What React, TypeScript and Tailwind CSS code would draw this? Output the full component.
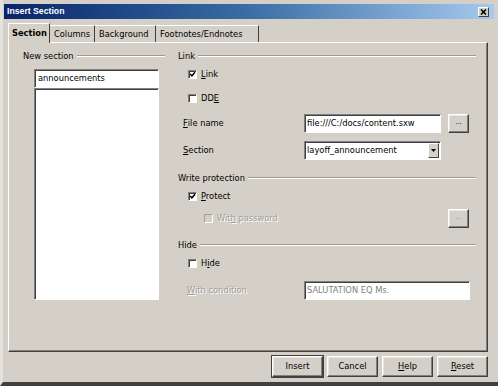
import React from "react";

const raised =
  "border border-t-white border-l-white border-r-[#404040] border-b-[#404040] shadow-[inset_-1px_-1px_0_#808080,inset_1px_1px_0_#e8e6e0]";
const sunken =
  "border border-t-[#808080] border-l-[#808080] border-r-white border-b-white shadow-[inset_1px_1px_0_#404040]";

function Heading({ children }: { children: React.ReactNode }) {
  return (
    <div className="flex items-center h-[10px] gap-[3px]">
      <span className="leading-none whitespace-nowrap">{children}</span>
      <div className="flex-1 h-[2px] border-t border-t-[#9c9a94] border-b border-b-white" />
    </div>
  );
}

function Check({ checked, disabled }: { checked?: boolean; disabled?: boolean }) {
  return (
    <span
      className={
        disabled
          ? "w-[9px] h-[9px] shrink-0 bg-[#d4d0c8] border border-t-[#a09e98] border-l-[#a09e98] border-r-white border-b-white"
          : "w-[9px] h-[9px] shrink-0 bg-white border border-t-[#808080] border-l-[#808080] border-r-white border-b-white shadow-[inset_1px_1px_0_#404040]"
      }
    >
      {checked && (
        <svg viewBox="0 0 7 7" className="w-[7px] h-[7px]">
          <path d="M1.2 3 L2.9 4.8 L6 1.2" fill="none" stroke="#000" strokeWidth="1.5" />
        </svg>
      )}
    </span>
  );
}

function CheckRow({
  checked,
  disabled,
  children,
}: {
  checked?: boolean;
  disabled?: boolean;
  children: React.ReactNode;
}) {
  return (
    <div className="flex items-center gap-[4px] h-[12px]">
      <Check checked={checked} disabled={disabled} />
      <span
        className={
          disabled ? "leading-none text-[#a09e98] [text-shadow:1px_1px_0_#fff]" : "leading-none"
        }
      >
        {children}
      </span>
    </div>
  );
}

function DotsButton({ disabled }: { disabled?: boolean }) {
  return (
    <div
      className={`w-[21px] h-[19px] flex items-center justify-center ${raised} ${
        disabled ? "text-[#a09e98]" : "text-black"
      }`}
    >
      <span className="leading-none text-[7px] -mt-[2px]">...</span>
    </div>
  );
}

function Button({ children, def }: { children: React.ReactNode; def?: boolean }) {
  return (
    <div
      className={`w-[51px] h-[21px] flex items-center justify-center ${raised} ${
        def ? "outline outline-1 outline-[#404040]" : ""
      }`}
    >
      <span className="leading-none">{children}</span>
    </div>
  );
}

export default function App() {
  return (
    <div className="w-[498px] h-[386px] bg-[#d4d0c8] flex flex-col text-[8.3px] text-black font-['DejaVu_Sans',sans-serif] border-l-[3px] border-l-[#e4e2dc] border-b-[4px] border-b-[#404040] overflow-hidden">
      {/* title bar */}
      <div className="mt-[4px] ml-[1px] mr-[4px] h-[15px] flex items-center bg-gradient-to-r from-[#0a246a] via-[#3a6ea5] to-[#a6caf0] pl-[3px] pr-[5px]">
        <span className="text-white font-bold text-[8.7px] leading-none font-['Liberation_Sans',sans-serif]">
          Insert Section
        </span>
        <div className="ml-auto w-[11px] h-[10px] bg-[#d4d0c8] flex items-center justify-center border border-t-white border-l-white border-r-[#404040] border-b-[#404040]">
          <svg viewBox="0 0 7 6" className="w-[7px] h-[6px]">
            <path d="M1 0.5 L6 5.5 M6 0.5 L1 5.5" stroke="#000" strokeWidth="1.6" />
          </svg>
        </div>
      </div>

      {/* tabs */}
      <div className="mt-[4px] ml-[5px] flex items-end h-[19px] relative z-10">
        <div className="h-[20px] px-[3px] flex items-center bg-[#d4d0c8] border-t border-l border-t-white border-l-white border-r border-r-[#404040] -mb-[1px] w-[42px]">
          <span className="font-bold leading-none">Section</span>
        </div>
        <div className="h-[17px] w-[45px] pl-[4px] flex items-center border-t border-t-white border-r border-r-[#404040]">
          <span className="leading-none">Columns</span>
        </div>
        <div className="h-[17px] w-[61px] pl-[4px] flex items-center border-t border-t-white border-r border-r-[#404040]">
          <span className="leading-none">Background</span>
        </div>
        <div className="h-[17px] w-[103px] pl-[4px] flex items-center border-t border-t-white border-r border-r-[#404040]">
          <span className="leading-none">Footnotes/Endnotes</span>
        </div>
      </div>

      {/* panel */}
      <div className="ml-[5px] mr-[10px] h-[310px] flex border-t border-l border-t-white border-l-white border-r border-b border-r-[#404040] border-b-[#404040] shadow-[inset_-1px_-1px_0_#808080]">
        {/* left column */}
        <div className="w-[162px] pl-[14px] pr-[6px] pt-[8px] flex flex-col">
          <Heading>New section</Heading>
          <div className="ml-[11px] mt-[8px] w-[125px] flex flex-col">
            <div className={`h-[19px] bg-white flex items-center pl-[3px] ${sunken}`}>
              <span className="leading-none">announcements</span>
            </div>
            <div className={`h-[212px] bg-white ${sunken}`} />
          </div>
        </div>

        {/* right column */}
        <div className="flex-1 pl-[7px] pr-[11px] pt-[8px] flex flex-col">
          <Heading>Link</Heading>
          <div className="pl-[10px] mt-[7px] flex flex-col gap-[12px]">
            <CheckRow checked>
              <span className="underline">L</span>ink
            </CheckRow>
            <CheckRow>
              DD<span className="underline">E</span>
            </CheckRow>
          </div>

          <div className="pl-[5px] pr-[7px] mt-[10px] flex items-start">
            <span className="w-[121px] h-[19px] flex items-center leading-none">
              <span className="underline">F</span>ile name
            </span>
            <div className={`w-[137px] h-[19px] bg-white flex items-center pl-[2px] ${sunken}`}>
              <span className="leading-none">file:///C:/docs/content.sxw</span>
            </div>
            <div className="ml-auto">
              <DotsButton />
            </div>
          </div>

          <div className="pl-[5px] pr-[7px] mt-[8px] flex items-start">
            <span className="w-[121px] h-[19px] flex items-center leading-none">
              <span className="underline">S</span>ection
            </span>
            <div className={`w-[137px] h-[19px] bg-white flex items-center pl-[2px] ${sunken}`}>
              <span className="leading-none flex-1">layoff_announcement</span>
              <div className="w-[11px] h-[15px] mr-[1px] bg-[#d4d0c8] flex items-center justify-center border border-t-white border-l-white border-r-[#404040] border-b-[#404040]">
                <svg viewBox="0 0 5 3" className="w-[5px] h-[3px]">
                  <path d="M0 0 L5 0 L2.5 3 Z" fill="#000" />
                </svg>
              </div>
            </div>
          </div>

          <div className="mt-[13px]">
            <Heading>Write protection</Heading>
          </div>
          <div className="pl-[10px] mt-[7px]">
            <CheckRow checked>
              <span className="underline">P</span>rotect
            </CheckRow>
          </div>
          <div className="pl-[26px] pr-[7px] mt-[7px] flex items-center h-[19px]">
            <CheckRow disabled>
              Wit<span className="underline">h</span> password
            </CheckRow>
            <div className="ml-auto">
              <DotsButton disabled />
            </div>
          </div>

          <div className="mt-[12px]">
            <Heading>Hide</Heading>
          </div>
          <div className="pl-[10px] mt-[7px]">
            <CheckRow>
              H<span className="underline">i</span>de
            </CheckRow>
          </div>
          <div className="pl-[9px] pr-[6px] mt-[12px] flex items-center">
            <span className="w-[117px] leading-none text-[#a09e98] [text-shadow:1px_1px_0_#fff]">
              <span className="underline">W</span>ith condition
            </span>
            <div className={`flex-1 h-[19px] bg-white flex items-center pl-[2px] ${sunken}`}>
              <span className="leading-none text-[#808080]">SALUTATION EQ Ms.</span>
            </div>
          </div>
        </div>
      </div>

      {/* buttons */}
      <div className="mt-[4px] mr-[10px] flex justify-end gap-[4px]">
        <Button def>Insert</Button>
        <Button>Cancel</Button>
        <Button>
          <span className="underline">H</span>elp
        </Button>
        <Button>
          <span className="underline">R</span>eset
        </Button>
      </div>
    </div>
  );
}
